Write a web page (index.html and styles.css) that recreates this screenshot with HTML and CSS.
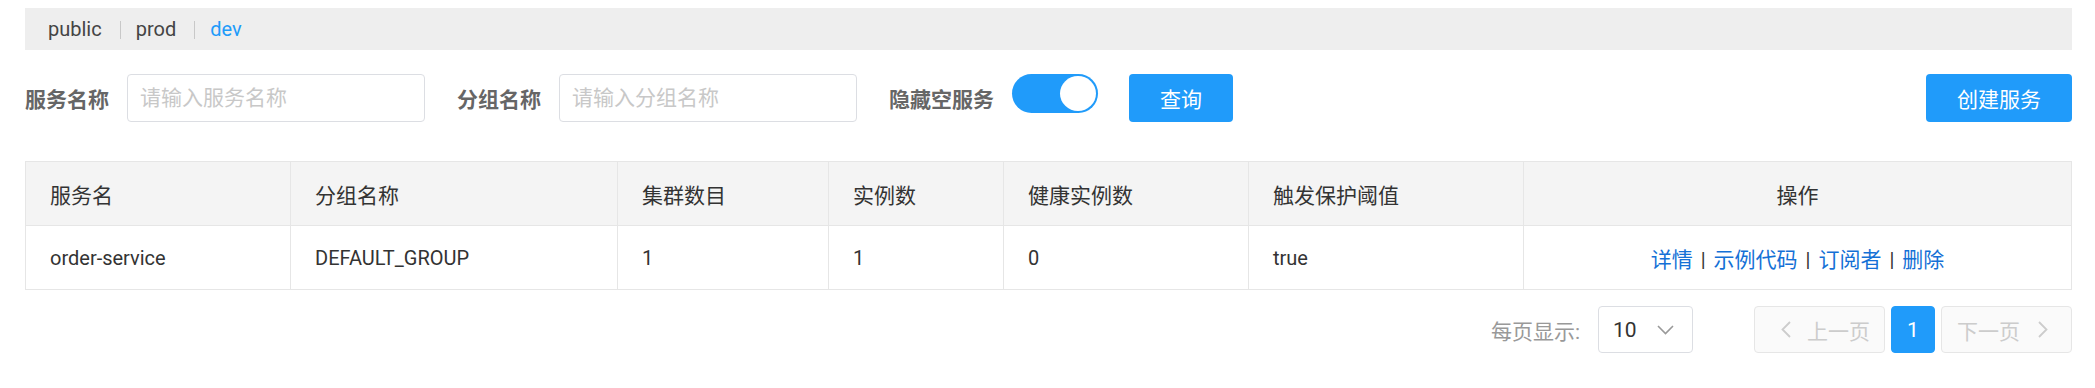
FILE: index.html
```html
<!DOCTYPE html>
<html lang="zh-CN">
<head>
    <meta charset="UTF-8">
    <meta name="viewport" content="width=device-width, initial-scale=1.0">
    <title>服务列表</title>
    <link rel="stylesheet" href="styles.css">
</head>
<body>
    <!-- Namespace bar -->
    <div class="ns-bar">
        <span class="ns-item">public</span>
        <span class="ns-sep"></span>
        <span class="ns-item">prod</span>
        <span class="ns-sep"></span>
        <span class="ns-item active">dev</span>
    </div>

    <!-- Search form -->
    <form class="filter">
        <label class="filter-label" for="serviceName">服务名称</label>
        <input class="filter-input" type="text" id="serviceName" placeholder="请输入服务名称">
        <label class="filter-label" for="groupName">分组名称</label>
        <input class="filter-input" type="text" id="groupName" placeholder="请输入分组名称">
        <span class="filter-label">隐藏空服务</span>
        <span class="switch"><span class="switch-knob"></span></span>
        <button type="button" class="btn btn-query">查询</button>
        <button type="button" class="btn btn-create">创建服务</button>
    </form>

    <!-- Service table -->
    <table class="services">
        <colgroup>
            <col class="c1"><col class="c2"><col class="c3"><col class="c4">
            <col class="c5"><col class="c6"><col class="c7">
        </colgroup>
        <thead>
            <tr>
                <th>服务名</th>
                <th>分组名称</th>
                <th>集群数目</th>
                <th>实例数</th>
                <th>健康实例数</th>
                <th>触发保护阈值</th>
                <th class="center">操作</th>
            </tr>
        </thead>
        <tbody>
            <tr>
                <td>order-service</td>
                <td>DEFAULT_GROUP</td>
                <td>1</td>
                <td>1</td>
                <td>0</td>
                <td>true</td>
                <td class="center">
                    <a href="#">详情</a><span class="sep">|</span><a href="#">示例代码</a><span class="sep">|</span><a href="#">订阅者</a><span class="sep">|</span><a href="#">删除</a>
                </td>
            </tr>
        </tbody>
    </table>

    <!-- Pagination -->
    <div class="pager">
        <span class="pager-label">每页显示:</span>
        <div class="page-size">
            <span>10</span>
            <svg width="17" height="10" viewBox="0 0 17 10"><path d="M1 1 L8.5 8.5 L16 1" fill="none" stroke="#999" stroke-width="1.6"/></svg>
        </div>
        <div class="pages">
            <button type="button" class="page-btn prev" disabled>
                <svg width="10" height="17" viewBox="0 0 10 17"><path d="M9 1 L1.5 8.5 L9 16" fill="none" stroke="#ccc" stroke-width="1.8"/></svg>
                上一页
            </button>
            <button type="button" class="page-btn current">1</button>
            <button type="button" class="page-btn next" disabled>
                下一页
                <svg width="10" height="17" viewBox="0 0 10 17"><path d="M1 1 L8.5 8.5 L1 16" fill="none" stroke="#ccc" stroke-width="1.8"/></svg>
            </button>
        </div>
    </div>
</body>
</html>
```

FILE: styles.css
```css
/* General Styling */
body {
    font-family: Roboto, "Noto Sans CJK SC", sans-serif;
    font-size: 20px;
    color: #333;
    margin: 0;
    padding: 8px 23px 0 25px;
}

/* Namespace bar */
.ns-bar {
    height: 42px;
    background-color: #eeeeee;
    display: flex;
    align-items: center;
    padding-left: 23px;
}
.ns-item {
    color: #444;
}
.ns-item.active {
    color: #209bfa;
}
.ns-sep {
    width: 1px;
    height: 18px;
    background-color: #c8c8c8;
    margin: 2px 15px 0 18px;
}

/* Search form */
.filter {
    display: flex;
    align-items: center;
    height: 48px;
    margin-top: 24px;
}
.filter-label {
    font-size: 21px;
    font-weight: bold;
    color: #666;
    margin-right: 18px;
}
.filter-input {
    width: 298px;
    height: 48px;
    box-sizing: border-box;
    border: 1px solid #dcdee3;
    border-radius: 4px;
    padding: 0 12px;
    margin-right: 32px;
    font-family: inherit;
    font-size: 21px;
    color: #333;
    outline: none;
}
.filter-input::placeholder {
    color: #c8c8c8;
}
.switch {
    width: 86px;
    height: 39px;
    border-radius: 20px;
    background-color: #209bfa;
    display: flex;
    align-items: center;
    justify-content: flex-end;
    padding: 0 2px;
    box-sizing: border-box;
    align-self: flex-start;
    margin-right: 31px;
}
.switch-knob {
    width: 36px;
    height: 35px;
    border-radius: 50%;
    background-color: #fff;
}
.btn {
    height: 48px;
    border: none;
    border-radius: 4px;
    background-color: #209bfa;
    color: #fff;
    font-family: inherit;
    font-size: 21px;
    cursor: pointer;
}
.btn-query {
    width: 104px;
}
.btn-create {
    width: 146px;
    margin-left: auto;
}

/* Table */
.services {
    width: 100%;
    margin-top: 39px;
    border-collapse: collapse;
    table-layout: fixed;
    border: 1px solid #e6e6e6;
}
.c1 { width: 265px; }
.c2 { width: 327px; }
.c3 { width: 211px; }
.c4 { width: 175px; }
.c5 { width: 245px; }
.c6 { width: 275px; }
.services th,
.services td {
    height: 63px;
    padding: 0 24px;
    border: 1px solid #e6e6e6;
    text-align: left;
    font-weight: normal;
    color: #333;
}
.services th {
    background-color: #f4f4f4;
    font-size: 21px;
}
.services .center {
    text-align: center;
}
.services a {
    color: #1470d6;
    text-decoration: none;
    font-size: 21px;
}
.services .sep {
    margin: 0 8px;
}

/* Pagination */
.pager {
    display: flex;
    justify-content: flex-end;
    align-items: center;
    margin-top: 16px;
}
.pager-label {
    color: #999;
    font-size: 21px;
    margin-right: 18px;
}
.page-size {
    width: 95px;
    height: 47px;
    box-sizing: border-box;
    border: 1px solid #dcdee3;
    border-radius: 4px;
    display: flex;
    align-items: center;
    justify-content: space-between;
    padding: 0 18px 0 14px;
    color: #333;
    font-size: 21px;
    margin-right: 61px;
}
.pages {
    display: flex;
    gap: 6px;
}
.page-btn {
    height: 47px;
    border: 1px solid #e6e6e6;
    border-radius: 4px;
    background-color: #fafafa;
    color: #ccc;
    font-family: inherit;
    font-size: 21px;
    display: flex;
    align-items: center;
    justify-content: flex-start;
    padding: 0;
}
.page-btn.prev {
    width: 131px;
    padding-left: 26px;
    gap: 16px;
}
.page-btn.next {
    width: 131px;
    padding-left: 15px;
    gap: 18px;
}
.page-btn.current {
    width: 44px;
    justify-content: center;
    background-color: #209bfa;
    border-color: #209bfa;
    color: #fff;
}
```
